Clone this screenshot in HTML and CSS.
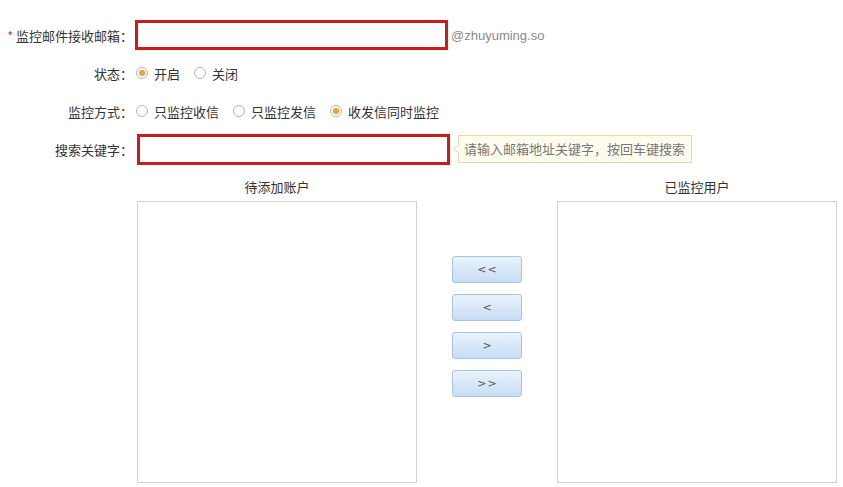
FILE: index.html
```html
<!DOCTYPE html>
<html lang="zh-CN">
<head>
    <meta charset="UTF-8">
    <title>邮件监控设置</title>
    <link rel="stylesheet" href="styles.css">
</head>
<body>

<div id="page">
    <form class="monitor-form">
        <div class="row">
            <label class="row-label"><span class="required">*</span> 监控邮件接收邮箱：</label>
            <div class="row-field">
                <input type="text" class="text-input error">
                <span class="suffix">@zhuyuming.so</span>
            </div>
        </div>

        <div class="row">
            <label class="row-label">状态：</label>
            <div class="row-field">
                <span class="option"><span class="radio checked"></span>开启</span>
                <span class="option"><span class="radio"></span>关闭</span>
            </div>
        </div>

        <div class="row">
            <label class="row-label">监控方式：</label>
            <div class="row-field">
                <span class="option"><span class="radio"></span>只监控收信</span>
                <span class="option"><span class="radio"></span>只监控发信</span>
                <span class="option"><span class="radio checked"></span>收发信同时监控</span>
            </div>
        </div>

        <div class="row">
            <label class="row-label">搜索关键字：</label>
            <div class="row-field">
                <input type="text" class="text-input error search">
                <span class="tip">请输入邮箱地址关键字，按回车键搜索</span>
            </div>
        </div>
    </form>

    <div class="transfer">
        <div class="list-col">
            <div class="list-title">待添加账户</div>
            <div class="list-box"></div>
        </div>

        <div class="move-col">
            <button type="button" class="move-btn">&lt;&lt;</button>
            <button type="button" class="move-btn">&lt;</button>
            <button type="button" class="move-btn">&gt;</button>
            <button type="button" class="move-btn">&gt;&gt;</button>
        </div>

        <div class="list-col">
            <div class="list-title">已监控用户</div>
            <div class="list-box"></div>
        </div>
    </div>
</div>

</body>
</html>
```

FILE: styles.css
```css
body {
    margin: 0;
    font-family: "Noto Sans CJK SC", "Liberation Sans", sans-serif;
    font-size: 13px;
    color: #333;
    background: #fff;
}

#page {
    padding-top: 16px;
}

/* form rows */
.row {
    display: flex;
    align-items: center;
    height: 38px;
}

.row-label {
    width: 133px;
    text-align: right;
    font-size: 13px;
    color: #333;
    white-space: nowrap;
    flex-shrink: 0;
}

.required {
    color: #d0312d;
    font-size: 12px;
}

.row-field {
    display: flex;
    align-items: center;
    margin-left: 3px;
}

.text-input {
    width: 313px;
    height: 30px;
    box-sizing: border-box;
    border: 3px solid #c91c1c;
    background: #fff;
    margin: 0 0 0 -1px;
    padding: 0 6px;
    outline: none;
    box-shadow: 0 0 1px #f3c9c9;
}

.text-input.search {
    margin-left: 1px;
    height: 31px;
}

.suffix {
    margin-left: 3px;
    font-family: "Liberation Sans", sans-serif;
    font-size: 13px;
    color: #8a8a8a;
}

/* radio options */
.option {
    display: inline-flex;
    align-items: center;
    font-size: 13px;
    margin-right: 14px;
}

.radio {
    width: 12px;
    height: 12px;
    box-sizing: border-box;
    border: 1px solid #b4b4b4;
    border-radius: 50%;
    background: #fff;
    margin-right: 6px;
    display: inline-flex;
    align-items: center;
    justify-content: center;
}

.radio.checked::after {
    content: "";
    width: 6px;
    height: 6px;
    border-radius: 50%;
    background: #f0a23a;
    box-shadow: 0 0 1px #f7c680;
}

/* tooltip next to search box */
.tip {
    position: relative;
    margin-left: 8px;
    height: 28px;
    box-sizing: border-box;
    padding: 0 6px 0 5px;
    line-height: 26px;
    font-size: 13px;
    color: #777;
    background: #fefcec;
    border: 1px solid #e3dab0;
}

.tip::before,
.tip::after {
    content: "";
    position: absolute;
    top: 8px;
    border-style: solid;
    border-color: transparent;
}

.tip::before {
    left: -6px;
    border-width: 5px 6px 5px 0;
    border-right-color: #e3dab0;
}

.tip::after {
    left: -5px;
    top: 9px;
    border-width: 4px 5px 4px 0;
    border-right-color: #fefcec;
}

/* account lists */
.transfer {
    display: flex;
    margin-left: 137px;
}

.list-col {
    width: 280px;
}

.list-title {
    height: 33px;
    padding-top: 11px;
    box-sizing: border-box;
    line-height: 16px;
    text-align: center;
    font-size: 13px;
    color: #333;
}

.list-box {
    height: 282px;
    box-sizing: border-box;
    border: 1px solid #d2d2d2;
    background: #fff;
}

.move-col {
    width: 140px;
    display: flex;
    flex-direction: column;
    align-items: center;
    padding-top: 88px;
}

.move-btn {
    width: 70px;
    height: 27px;
    margin-bottom: 11px;
    border: 1px solid #a9c4e0;
    border-radius: 3px;
    background: linear-gradient(#e9f3fd, #c8ddf4);
    color: #555;
    font-family: "DejaVu Sans", sans-serif;
    font-size: 11px;
    letter-spacing: 1px;
    padding: 0 0 0 1px;
    cursor: pointer;
}
```
